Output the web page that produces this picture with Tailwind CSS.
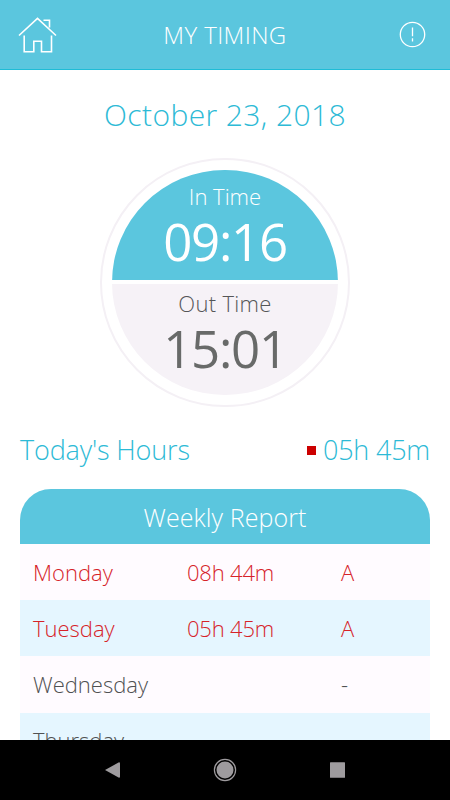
<!DOCTYPE html>
<html lang="en">
<head>
    <meta charset="UTF-8">
    <meta name="viewport" content="width=device-width, initial-scale=1.0">
    <title>My Timing</title>
    <script src="https://cdn.jsdelivr.net/npm/@tailwindcss/browser@4"></script>
</head>
<body class="bg-white font-['Open_Sans','Noto_Sans',sans-serif] font-light whitespace-nowrap">
    <div class="h-[800px] w-[450px] flex flex-col overflow-hidden">
        <!-- Header -->
        <header class="h-[70px] shrink-0 bg-[#5bc6de] border-b border-[#1fbcd6] text-white grid grid-cols-[1fr_auto_1fr] items-center pl-[18px] pr-[24px]">
            <svg class="w-[39px] h-[38px] mt-[2px]" viewBox="0 0 39 38" fill="none" stroke="currentColor" stroke-width="1.600">
                <path d="M1 18.500 19.500 1.300 38 18.500M25.500 3.300h6v7.200M6.200 18.500v16.300h9.600V24.200h7.700v10.600h10V18.500" />
            </svg>
            <h1 class="ml-[6px] text-[24px] leading-[30px] tracking-[0.4px]">MY TIMING</h1>
            <svg class="w-[27px] h-[27px] justify-self-end" viewBox="0 0 27 27" fill="none" stroke="currentColor" stroke-width="1.300">
                <circle cx="13.500" cy="13.500" r="12.200" />
                <path d="M13.500 6.500v8.700M13.500 17.300v3.200" />
            </svg>
        </header>

        <!-- Main Content -->
        <main class="flex-1 min-h-0 overflow-hidden px-5">
            <h2 class="mt-[25px] h-10 text-center text-[30px] leading-10 tracking-[0.4px] text-[#2dbad6]">October 23, 2018</h2>

            <!-- In / out clock -->
            <div class="mx-auto mt-[23px] w-[250px] h-[249px] rounded-full border-2 border-[#f4f0f5] p-[10px] text-center">
                <div class="h-full w-full rounded-full overflow-hidden flex flex-col gap-1">
                    <div class="h-[110px] bg-[#5bc6de] text-white">
                        <p class="pt-[11px] text-[22px] leading-[30px]">In Time</p>
                        <p class="text-[51px] leading-[60px] font-medium tracking-[-1.300px]">09:16</p>
                    </div>
                    <div class="flex-1 bg-[#f6f2f7] text-[#555657]">
                        <p class="pt-[4px] text-[22px] leading-[30px] tracking-[0.3px]">Out Time</p>
                        <p class="text-[51px] leading-[60px] font-medium tracking-[-1.300px] text-[#686a69]">15:01</p>
                    </div>
                </div>
            </div>

            <!-- Today's total -->
            <div class="mt-[23px] h-10 flex items-center justify-between text-[27px] leading-10 text-[#2dbad6]">
                <span class="tracking-[-0.150px]">Today's Hours</span>
                <div class="flex items-center gap-[7px]">
                    <span class="w-[9px] h-[9px] bg-[#cc0000]"></span>
                    <span class="tracking-[-0.200px]">05h 45m</span>
                </div>
            </div>

            <!-- Weekly report -->
            <section class="mt-[19px] text-[22px]">
                <h3 class="h-[55px] rounded-t-[31px] bg-[#5bc6de] text-white text-center text-[25px] leading-[56px] tracking-[0.1px]">Weekly Report</h3>
                <div class="grid grid-cols-[154px_154px_1fr] h-14 pl-[13px] leading-[57px] bg-[#fffbff] text-[#d62329]">
                    <span>Monday</span><span class="tracking-[-0.200px]">08h 44m</span><span>A</span>
                </div>
                <div class="grid grid-cols-[154px_154px_1fr] h-14 pl-[13px] leading-[57px] bg-[#e5f6ff] text-[#d62329]">
                    <span>Tuesday</span><span class="tracking-[-0.200px]">05h 45m</span><span>A</span>
                </div>
                <div class="grid grid-cols-[154px_154px_1fr] h-[57px] pl-[13px] leading-[57px] bg-[#fffbff] text-[#505152]">
                    <span>Wednesday</span><span></span><span>-</span>
                </div>
                <div class="grid grid-cols-[154px_154px_1fr] h-14 pl-[13px] leading-[55px] bg-[#e5f6ff] text-[#505152]">
                    <span>Thursday</span>
                </div>
            </section>
        </main>

        <!-- Navigation bar -->
        <nav class="h-[60px] shrink-0 bg-black text-[#9e9b9e] flex items-center justify-center gap-[88px]">
            <svg class="w-6 h-6" viewBox="0 0 24 24" fill="currentColor"><path d="M4 12 18 4.200q1 0 1 1v13.600q0 1-1 1Z" /></svg>
            <svg class="w-6 h-6" viewBox="0 0 24 24" fill="currentColor"><circle cx="12" cy="12" r="8.500" /><circle cx="12" cy="12" r="10.600" fill="none" stroke="currentColor" stroke-width="1.200" /></svg>
            <svg class="w-6 h-6" viewBox="0 0 24 24" fill="currentColor"><rect x="5" y="4.200" width="15" height="15.600" rx=".5" /></svg>
        </nav>
    </div>
</body>
</html>
